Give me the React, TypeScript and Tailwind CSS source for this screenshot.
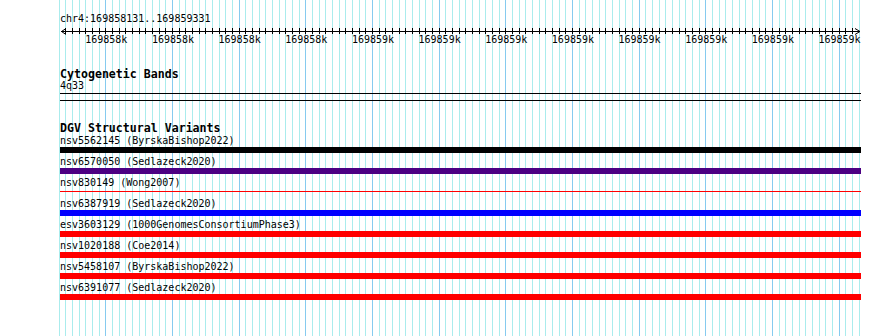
const variants = [
	{ label: "nsv5562145 (ByrskaBishop2022)", bar: "bg-black" },
	{ label: "nsv6570050 (Sedlazeck2020)", bar: "bg-[#4b0082]" },
	{ label: "nsv830149 (Wong2007)", bar: "thin" },
	{ label: "nsv6387919 (Sedlazeck2020)", bar: "bg-[#0000ff]" },
	{ label: "esv3603129 (1000GenomesConsortiumPhase3)", bar: "bg-[#ff0000]" },
	{ label: "nsv1020188 (Coe2014)", bar: "bg-[#ff0000]" },
	{ label: "nsv5458107 (ByrskaBishop2022)", bar: "bg-[#ff0000]" },
	{ label: "nsv6391077 (Sedlazeck2020)", bar: "bg-[#ff0000]" },
];

const tickLabels = [
	"169858k",
	"169858k",
	"169858k",
	"169858k",
	"169859k",
	"169859k",
	"169859k",
	"169859k",
	"169859k",
	"169859k",
	"169859k",
	"169859k",
];

// grid lines every 10bp, a darker one every 100bp
const gridX = Array.from({ length: 121 }, (_, i) => ({
	x: Math.floor(59.333 + (i * 20) / 3) + 0.5,
	major: i % 10 === 7,
}));

const GridLines = () => (
	<svg
		className="absolute inset-0"
		width={890}
		height={336}
		shapeRendering="crispEdges"
	>
		{gridX.map((g) => (
			<line
				key={g.x}
				x1={g.x}
				x2={g.x}
				y1={0}
				y2={336}
				stroke={g.major ? "#86cbef" : "#aaeced"}
				strokeWidth={1}
			/>
		))}
	</svg>
);

const Ruler = () => (
	<svg width={802} height={9} className="block overflow-visible">
		<line x1={1} x2={800} y1={6.5} y2={6.5} stroke="black" />
		<polyline points="6,3.5 1.5,6.5 6,9.5" fill="none" stroke="black" />
		<polyline points="795,3.5 800,6.5 795,9.5" fill="none" stroke="black" />
		{gridX.slice(1, 120).map((g) => (
			<line
				key={g.x}
				x1={g.x - 60}
				x2={g.x - 60}
				y1={3}
				y2={9}
				stroke="black"
				shapeRendering="crispEdges"
			/>
		))}
	</svg>
);

const App = () => {
	return (
		<div className="relative w-[890px] h-[336px] overflow-hidden bg-white font-['DejaVu_Sans_Mono',monospace] text-[10px] leading-[12px] text-black">
			<GridLines />
			<div className="relative flex flex-col pl-[60px] pt-[13px]">
				<div className="h-[12px]">chr4:169858131..169859331</div>
				<Ruler />
				<div className="flex h-[12px] pl-[13px]">
					{tickLabels.map((t, i) => (
						<div key={i} className="w-[66.667px] shrink-0 text-center">
							{t}
						</div>
					))}
				</div>

				<div className="mt-[22px] h-[12px] text-[11.6px] font-bold">
					Cytogenetic Bands
				</div>
				<div className="h-[12px]">4q33</div>
				<div className="mt-[1px] h-[8px] w-[801px] border-y border-black" />

				<div className="mt-[21px] h-[12px] text-[11.6px] font-bold">
					DGV Structural Variants
				</div>
				<div className="mt-[1px] flex flex-col gap-[3px]">
					{variants.map((v) => (
						<div key={v.label} className="flex flex-col">
							<div className="h-[12px] whitespace-pre">{v.label}</div>
							{v.bar === "thin" ? (
								<div className="flex h-[6px] w-[801px] flex-col pt-[2px]">
									<div className="h-[1px] bg-[#ff0000]" />
								</div>
							) : (
								<div className={`h-[6px] w-[801px] ${v.bar}`} />
							)}
						</div>
					))}
				</div>
			</div>
		</div>
	);
};

export default App;
